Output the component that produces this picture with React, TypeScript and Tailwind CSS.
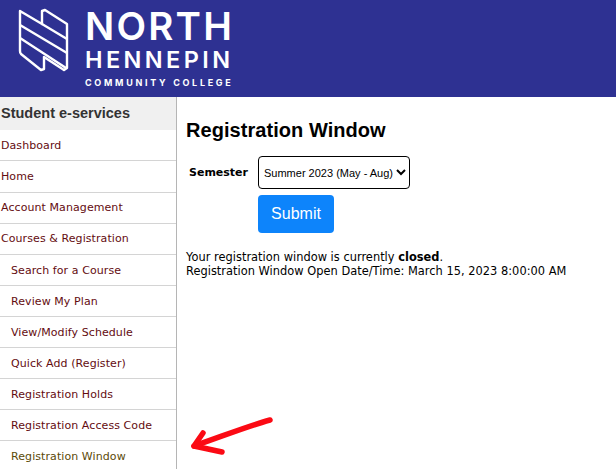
const items: [string, boolean][] = [
  ["Dashboard", false],
  ["Home", false],
  ["Account Management", false],
  ["Courses & Registration", false],
  ["Search for a Course", true],
  ["Review My Plan", true],
  ["View/Modify Schedule", true],
  ["Quick Add (Register)", true],
  ["Registration Holds", true],
  ["Registration Access Code", true],
];

function Mark() {
  return (
    <svg width="54" height="66" viewBox="0 0 54 66" fill="none" stroke="#fff" strokeWidth="2.4" strokeLinejoin="round" className="block shrink-0">
      <path d="M3 3 L25 16 L25 3 L28 2 L50 16 L50 60 L47 62 L27 49 L27 61 L24 62 L4 46 Q3 45 3 43 Z" />
      <path d="M3 17 L50 45 M3 30 L49 60 M25 16 L50 31" />
    </svg>
  );
}

export default function App() {
  return (
    <div className="relative h-[469px] w-[616px] overflow-hidden bg-white" style={{ fontFamily: '"DejaVu Sans", sans-serif' }}>
      <header className="flex h-[97px] items-start bg-[#2e3192] pl-[17px] pt-2 text-white">
        <Mark />
        <div className="ml-[14px] flex w-[148px] flex-col items-start font-['Inter',sans-serif] font-semibold">
          <div className="mt-[-2px] text-[38.5px] leading-[40px] tracking-[2.2px]">NORTH</div>
          <div className="mt-[1px] text-[23.5px] leading-[25px] tracking-[3.4px]">HENNEPIN</div>
          <div className="mt-[5px] whitespace-nowrap text-[9px] font-bold leading-[11px] tracking-[2.7px]">COMMUNITY COLLEGE</div>
        </div>
      </header>
      <div className="flex">
        <nav className="h-[372px] w-[177px] shrink-0 border-r border-[#b5b5b5]">
          <div className="flex h-[33.4px] items-center bg-[#f0f0f0] pl-px font-['Liberation_Sans',sans-serif] text-[14.5px] font-bold text-[#333]">Student e-services</div>
          {items.map(([label, sub]) => (
            <div key={label} className={`flex h-[31.1px] items-center whitespace-nowrap border-b border-[#d4d4d4] pt-[2px] text-[11px] tracking-[0.08px] text-[#640c10] ${sub ? "pl-[11px]" : "pl-px"}`}>{label}</div>
          ))}
          <div className="flex h-[31px] items-center pl-[11px] text-[11px] tracking-[0.08px] text-[#5c4a08]">Registration Window</div>
        </nav>
        <main className="pl-[9px] pt-[22px] font-['Liberation_Sans',sans-serif] text-black">
          <h1 className="text-[20px] font-bold leading-[23px] tracking-[0.05px]">Registration Window</h1>
          <div className="mt-[14px] flex items-center">
            <span className="ml-[3px] w-[69px] pt-[2px] text-[11px] font-bold" style={{ fontFamily: '"DejaVu Sans", sans-serif' }}>Semester</span>
            <select className="h-[33px] w-[152px] rounded-[4px] border border-black bg-white pl-px text-[11px]" defaultValue="s">
              <option value="s">Summer 2023 (May - Aug)</option>
            </select>
          </div>
          <button className="ml-[72px] mt-[6px] block h-[38px] w-[76px] rounded-[4px] bg-[#0d84fb] text-[16px] text-white">Submit</button>
          <p className="mt-[17px] whitespace-nowrap text-[11.4px] leading-[14px] tracking-[0.02px]" style={{ fontFamily: '"DejaVu Sans", sans-serif' }}>
            Your registration window is currently <b>closed</b>.<br />
            Registration Window Open Date/Time: March 15, 2023 8:00:00 AM
          </p>
        </main>
      </div>
      <svg className="absolute left-[188px] top-[412px] blur-[0.6px]" width="90" height="46" viewBox="0 0 90 46" fill="none" stroke="#fb0a14" strokeLinecap="round" strokeLinejoin="round">
        <path d="M82 8 C60 14 35 24 6 34" strokeWidth="5.5" />
        <path d="M15 21 L6 34 L34 40" strokeWidth="5.5" />
      </svg>
    </div>
  );
}
